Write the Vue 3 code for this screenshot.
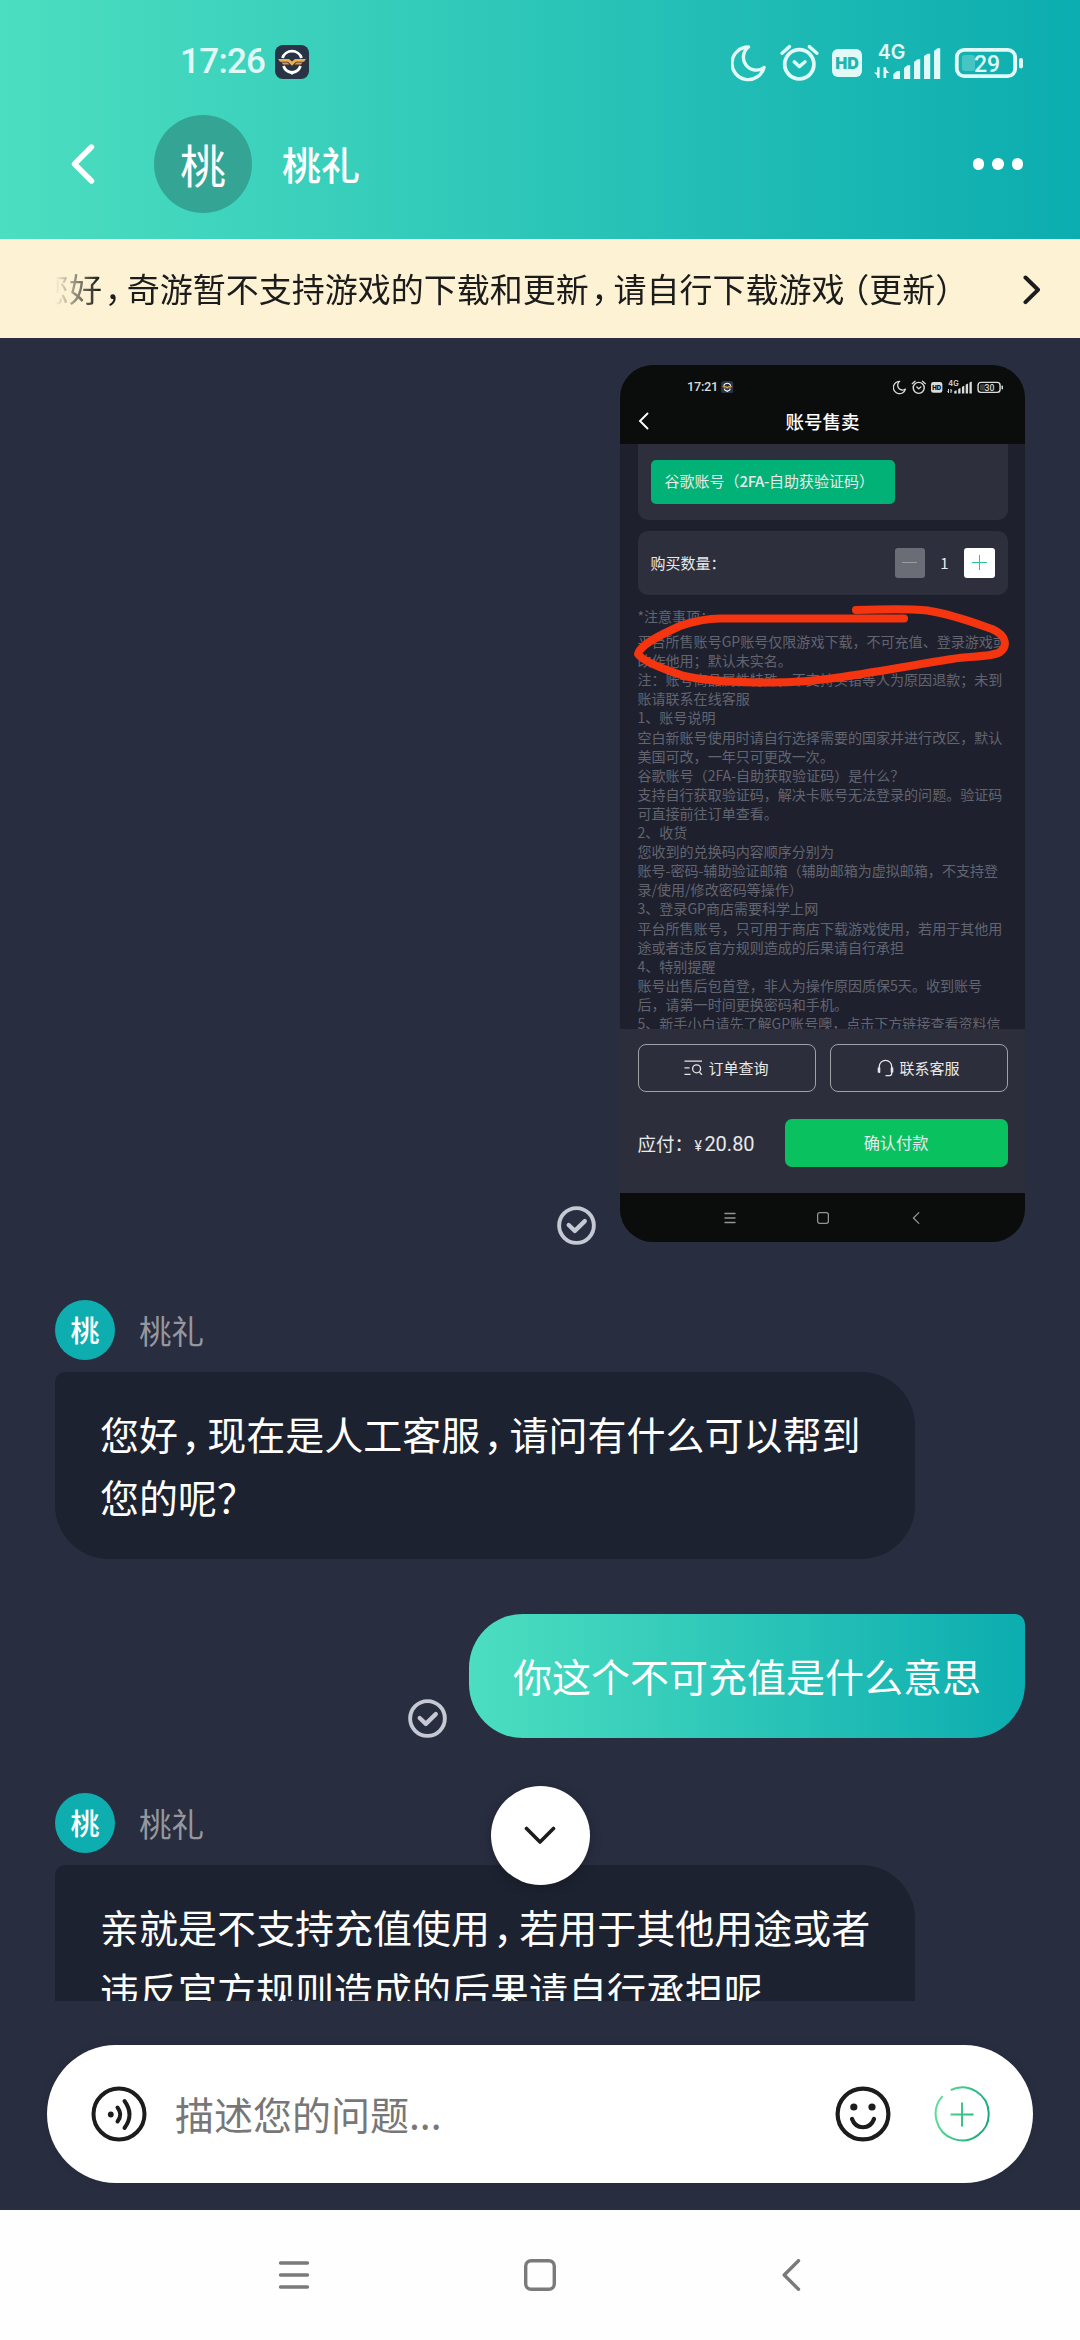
<script setup>
const banner = '您好，奇游暂不支持游戏的下载和更新，请自行下载游戏（更新）'
const agent = '桃礼'
const greeting = ['您好，现在是人工客服，请问有什么可以帮到', '您的呢？']
const reply = ['亲就是不支持充值使用，若用于其他用途或者', '违反官方规则造成的后果请自行承担呢']

const notes = [
  '平台所售账号GP账号仅限游戏下载，不可充值、登录游戏或',
  '改作他用；默认未实名。',
  '注：账号商品属性特殊，不支持买错等人为原因退款；未到',
  '账请联系在线客服',
  '1、账号说明',
  '空白新账号使用时请自行选择需要的国家并进行改区，默认',
  '美国可改，一年只可更改一次。',
  '谷歌账号（2FA-自助获取验证码）是什么？',
  '支持自行获取验证码，解决卡账号无法登录的问题。验证码',
  '可直接前往订单查看。',
  '2、收货',
  '您收到的兑换码内容顺序分别为',
  '账号-密码-辅助验证邮箱（辅助邮箱为虚拟邮箱，不支持登',
  '录/使用/修改密码等操作）',
  '3、登录GP商店需要科学上网',
  '平台所售账号，只可用于商店下载游戏使用，若用于其他用',
  '途或者违反官方规则造成的后果请自行承担',
  '4、特别提醒',
  '账号出售后包首登，非人为操作原因质保5天。收到账号',
  '后，请第一时间更换密码和手机。',
  '5、新手小白请先了解GP账号噢，点击下方链接查看资料信',
]

// Full-width punctuation is set tighter than the ideographs around it.
const kinds = { '，': 'comma', '（': 'paren', '？': 'query' }
const pieces = (text) =>
  text.split(/([，（？])/).filter(Boolean).map((s) => ({ s, k: kinds[s] || '' }))
</script>

<template>
  <div class="screen">
    <svg class="defs" width="0" height="0" aria-hidden="true">
      <symbol id="status" viewBox="0 0 292 42">
        <path d="M17.500 6A16.300 16.300 0 1 0 33 26.500A12.700 12.700 0 0 1 17.500 6Z" fill="none" stroke="currentColor" stroke-width="3.400" stroke-linejoin="round" />
        <g fill="none" stroke="currentColor" stroke-linecap="round" stroke-linejoin="round">
          <circle cx="68.3" cy="23.3" r="14.6" stroke-width="3.8" />
          <path d="M51 12.2L58.5 5.6M78.3 5.6L86 12.2" stroke-width="3.4" />
          <path d="M63.2 20.8L68.3 25.6L74 20.8" stroke-width="3.4" />
        </g>
        <rect x="101" y="8" width="30" height="28" rx="6" fill="currentColor" />
        <path d="M148.6 26.2V37H146V34.2L143 31.4H146V26.2ZM152.5 26.2H155.2V28.8L158.4 32H155.2V37H152.5Z" fill="currentColor" />
        <path d="M162.4 38V33L166 30H169V38ZM173 38V27L176.5 24.3H179.2V38ZM183 38V21L186.5 18.3H189.2V38ZM193 38V15L196.5 12.7H199.2V38ZM203 38V10L206.5 7.3H209.2V38Z" fill="currentColor" />
        <rect x="225.8" y="8.8" width="58.4" height="26.4" rx="7.5" fill="none" stroke="currentColor" stroke-width="3.8" />
        <rect x="231" y="14" width="13" height="16" rx="3" fill="currentColor" opacity=".25" />
        <rect x="288" y="17" width="4" height="10.5" rx="2" fill="currentColor" />
      </symbol>
      <symbol id="app-mark" viewBox="0 0 34 34">
        <rect width="34" height="34" rx="8" fill="#283345" />
        <path d="M7.5 13A10 10 0 0 1 26.500 13M8.500 21A10 10 0 0 0 17 27.500A10 10 0 0 0 25.500 21" fill="none" stroke="#fff" stroke-width="2.8" />
        <path d="M14 27H20L17 30Z" fill="#fff" />
        <path d="M3 14H14L17 16.500L20 14H31L29 16.800H21L17 20.800L13 16.800H5Z" fill="#eeb04e" />
        <path d="M6.500 17.600H12.500L14.500 19.600H8ZM27.500 17.600H21.500L19.500 19.600H26Z" fill="#e8963a" />
      </symbol>
      <symbol id="tick" viewBox="0 0 40 40">
        <circle cx="20" cy="20" r="17.8" fill="none" stroke="currentColor" stroke-width="4" />
        <path d="M12 19.500L18.300 25.500L28.500 15.500" fill="none" stroke="currentColor" stroke-width="4.400" stroke-linecap="round" stroke-linejoin="round" />
      </symbol>
      <symbol id="nav-menu" viewBox="0 0 32 32">
        <path d="M2.500 4H29.500M2.500 16H29.500M2.500 28H29.500" fill="none" stroke="currentColor" stroke-width="3.400" stroke-linecap="round" />
      </symbol>
      <symbol id="nav-home" viewBox="0 0 32 32">
        <rect x="1.700" y="1.700" width="28.600" height="28.600" rx="5.500" fill="none" stroke="currentColor" stroke-width="3.400" />
      </symbol>
      <symbol id="nav-back" viewBox="0 0 32 32">
        <path d="M23.500 1.700L9.200 16L23.500 30.300" fill="none" stroke="currentColor" stroke-width="3.400" stroke-linecap="round" stroke-linejoin="round" />
      </symbol>
    </svg>

    <header class="header">
      <div class="status">
        <span class="clock">17:26</span>
        <svg class="app-mark"><use href="#app-mark" /></svg>
        <svg class="cluster" viewBox="0 0 292 42">
          <use href="#status" width="292" height="42" />
          <text x="116" y="28.200" class="hd">HD</text>
          <text x="160.500" y="17.800" class="net">4G</text>
          <text x="256" y="30.600" class="pct">29</text>
        </svg>
      </div>
      <div class="titlebar">
        <svg class="back" viewBox="0 0 24 40">
          <path d="M20.500 3L3.500 20L20.500 37" fill="none" stroke="#fff" stroke-width="5.400" stroke-linecap="round" stroke-linejoin="round" />
        </svg>
        <div class="avatar big"><span>桃</span></div>
        <h1 class="name">{{ agent }}</h1>
        <div class="more"><i></i><i></i><i></i></div>
      </div>
    </header>

    <div class="banner">
      <div class="marquee"><p><span v-for="(p, i) in pieces(banner)" :key="i" :class="p.k">{{ p.s }}</span></p></div>
      <svg class="go" viewBox="0 0 18 30">
        <path d="M2.500 2.500L15 14.800L2.500 27.200" fill="none" stroke="#1c1c1c" stroke-width="4" stroke-linecap="round" stroke-linejoin="round" />
      </svg>
    </div>

    <main class="chat">
      <div class="mine shot-row">
        <svg class="tick"><use href="#tick" /></svg>
        <div class="shot">
          <div class="s-top">
            <div class="s-status">
              <span class="s-clock">17:21</span>
              <svg class="s-mark"><use href="#app-mark" /></svg>
              <svg class="s-cluster" viewBox="0 0 292 42">
                <use href="#status" width="292" height="42" />
                <text x="116" y="28.200" class="hd dark">HD</text>
                <text x="160.500" y="17.800" class="net">4G</text>
                <text x="256" y="30.600" class="pct">30</text>
              </svg>
            </div>
            <div class="s-title">
              <svg class="s-back" viewBox="0 0 12 18">
                <path d="M9.500 1.500L2 9L9.500 16.500" fill="none" stroke="#fff" stroke-width="1.900" stroke-linecap="round" />
              </svg>
              <b>账号售卖</b>
            </div>
          </div>
          <div class="s-body">
            <div class="s-card first"><div class="s-opt">谷歌账号（<em>2FA-</em>自助获验证码）</div></div>
            <div class="s-card qty">
              <span class="q-label">购买数量：</span>
              <i class="q-btn minus"></i>
              <span class="q-num">1</span>
              <i class="q-btn plus"></i>
            </div>
            <p class="s-note head">*注意事项：</p>
            <p v-for="(n, i) in notes" :key="i" class="s-note">{{ n }}</p>
          </div>
          <div class="s-foot">
            <div class="s-pair">
              <div class="s-out">
                <svg width="19" height="16" viewBox="0 0 19 16" fill="none" stroke="#e6e6e8" stroke-width="1.300">
                  <path d="M.5 1.200H18M.5 7.800H5.500M.5 14.300H6.500M15.500 12.200L18 14.800" /><circle cx="12.600" cy="8.800" r="4" />
                </svg>
                订单查询
              </div>
              <div class="s-out">
                <svg width="17" height="18" viewBox="0 0 17 18" fill="none" stroke="#e6e6e8" stroke-width="1.300">
                  <path d="M2.300 14V7.500A6.200 6.200 0 0 1 14.700 7.500V14.500Q14.700 16.600 12.500 16.600H8.500" /><path d="M2 8.500V13.500M15 8.500V13.500" stroke-width="2.600" />
                </svg>
                联系客服
              </div>
            </div>
            <div class="s-pay">
              <span class="s-sum">应付：<small>¥</small><span class="s-num">20.80</span></span>
              <div class="s-ok">确认付款</div>
            </div>
          </div>
          <div class="s-nav">
            <svg><use href="#nav-menu" /></svg>
            <svg><use href="#nav-home" /></svg>
            <svg><use href="#nav-back" /></svg>
          </div>
          <svg class="mark" viewBox="0 0 405 877">
            <path d="M236 245C270 244 300 244 310 246C334 250 352 257 372 264C388 271 387 282 380 287C372 292 352 291 332 294C300 299 262 306 222 312C190 317 160 318 136 317.500C110 317 86 316 64 311C46 305 22 296 18 289C20 280 40 270 60 261C78 255 90 253.500 100 253.500H284" fill="none" stroke="#f5350f" stroke-width="8" stroke-linecap="round" stroke-linejoin="round" />
          </svg>
        </div>
      </div>

      <div class="who"><div class="avatar"><span>桃</span></div><span>{{ agent }}</span></div>
      <div class="bubble">
        <p v-for="(l, j) in greeting" :key="j"><span v-for="(p, i) in pieces(l)" :key="i" :class="p.k">{{ p.s }}</span></p>
      </div>

      <div class="mine text-row">
        <svg class="tick"><use href="#tick" /></svg>
        <div class="bubble own"><p>你这个不可充值是什么意思</p></div>
      </div>

      <div class="who second"><div class="avatar"><span>桃</span></div><span>{{ agent }}</span></div>
      <div class="bubble">
        <p v-for="(l, j) in reply" :key="j"><span v-for="(p, i) in pieces(l)" :key="i" :class="p.k">{{ p.s }}</span></p>
      </div>
    </main>

    <div class="jump">
      <svg width="32" height="20" viewBox="0 0 32 20"><path d="M2.500 2.500L16 16L29.500 2.500" fill="none" stroke="#1c1c1c" stroke-width="3.600" stroke-linecap="round" stroke-linejoin="round" /></svg>
    </div>

    <div class="composer">
      <div class="field">
        <svg class="ic" viewBox="0 0 56 56" fill="none" stroke="#1c1c1c" stroke-width="4" stroke-linecap="round">
          <circle cx="28" cy="28" r="25.500" />
          <circle cx="19.800" cy="28.500" r="2.900" fill="#1c1c1c" stroke="none" />
          <path d="M26.500 21.500Q32 28.500 26.500 35.500M33.500 15Q43.500 28.500 33.500 42" />
        </svg>
        <span class="hint">描述您的问题...</span>
        <svg class="ic" viewBox="0 0 56 56" fill="none" stroke="#1c1c1c" stroke-width="4.200" stroke-linecap="round">
          <circle cx="28" cy="28" r="25.400" />
          <circle cx="18.800" cy="21" r="3.600" fill="#1c1c1c" stroke="none" />
          <circle cx="37" cy="21" r="3.600" fill="#1c1c1c" stroke="none" />
          <path d="M17 33C21 44 35 44 39 33" />
        </svg>
        <svg class="ic add" viewBox="0 0 56 56" fill="none" stroke="url(#ring)" stroke-width="2">
          <defs>
            <linearGradient id="ring" gradientUnits="userSpaceOnUse" x1="0" y1="20" x2="56" y2="34">
              <stop offset="0" stop-color="#5fe09a" /><stop offset="1" stop-color="#15a878" />
            </linearGradient>
          </defs>
          <path d="M16.800 4A26.500 26.500 0 1 1 8.500 10.200M28 16.500V40.500M16.500 28.500H39.500" />
        </svg>
      </div>
    </div>

    <nav class="nav">
      <svg><use href="#nav-menu" /></svg>
      <svg><use href="#nav-home" /></svg>
      <svg class="nav-back"><use href="#nav-back" /></svg>
    </nav>
  </div>
</template>

<style>
body { margin: 0; }
</style>

<style scoped>
.screen {
  position: relative;
  display: flex;
  flex-direction: column;
  width: 1080px;
  height: 2340px;
  overflow: hidden;
  background: #282d40;
  font-family: "Noto Sans CJK SC", sans-serif;
  color: #fff;
}
.screen p, h1 { margin: 0; font-weight: 400; white-space: nowrap; }
.defs { position: absolute; }
.comma { font-feature-settings: "halt"; margin: 0 .17em 0 .08em; }
.paren { font-feature-settings: "halt"; margin-left: .25em; }
.query { font-feature-settings: "palt"; }

.header { height: 239px; flex: none; background: linear-gradient(90deg, #4cdec0, #0cadb0); }
.status { display: flex; align-items: center; height: 85px; padding: 38px 57px 0 180px; box-sizing: border-box; color: #e2faf7; }
.clock { width: 95px; font: 500 35px/40px Roboto, sans-serif; letter-spacing: -.7px; }
.app-mark { width: 34px; height: 34px; margin-top: 1px; }
.cluster { width: 292px; height: 42px; margin-left: auto; }
.hd { font: 900 16px Inter, sans-serif; fill: #1fb5b1; text-anchor: middle; }
.hd.dark { fill: #0b0d0d; }
.net { font: 600 19.500px Inter, sans-serif; fill: currentColor; text-anchor: middle; }
.pct { font: 500 23px Roboto, sans-serif; fill: currentColor; text-anchor: middle; }
.titlebar { display: flex; align-items: center; height: 98px; margin-top: 30px; padding: 0 57px 0 71px; }
.back { width: 24px; height: 40px; margin-right: 59px; }
.avatar { display: flex; align-items: center; justify-content: center; flex: none; width: 60px; height: 60px; border-radius: 50%; background: #0eaeb0; font-size: 29px; font-weight: 500; line-height: 40px; }
.avatar span { margin-top: -2px; }
.avatar.big { width: 98px; height: 98px; background: #34a594; font-size: 46px; font-weight: 400; }
.name { margin: -2px 0 0 30px; font-size: 39px; font-weight: 500; line-height: 60px; }
.more { display: flex; gap: 8px; margin-left: auto; }
.more i { width: 11.500px; height: 11.500px; border-radius: 50%; background: #fff; }

.banner { display: flex; align-items: center; justify-content: space-between; flex: none; height: 99px; padding: 0 39px 0 55px; background: #fdf3d4; color: #1c1c1c; font-size: 33px; line-height: 50px; }
.marquee { display: flex; width: 920px; overflow: hidden; mask-image: linear-gradient(90deg, transparent, #000 44px); }
.marquee p { margin: -2px 0 0 -19px; }
.go { width: 18px; height: 30px; margin-top: 2px; }

.chat { display: flex; flex-direction: column; align-items: flex-start; flex: none; height: 1663px; overflow: hidden; padding: 27px 55px 0; box-sizing: border-box; }
.mine { display: flex; align-items: flex-end; align-self: flex-end; gap: 22px; }
.shot-row { gap: 24px; }
.tick { width: 39px; height: 39px; color: #c6c9d3; }
.shot-row .tick { margin-bottom: -3px; }
.text-row { margin-top: 55px; }
.who { display: flex; align-items: center; gap: 24px; height: 60px; margin: 58px 0 12px; font-size: 32.500px; color: #96979d; line-height: 50px; }
.who.second { margin-top: 55px; }
.who > span { margin-top: -1px; }
.who .avatar { color: #fff; }
.bubble { flex: none; width: 860px; height: 187px; padding: 30px 45px 0; box-sizing: border-box; border-radius: 10px 54px 54px 54px; background: #1d2230; font-size: 39px; line-height: 63px; }
.bubble.own { width: 556px; height: 124px; padding: 30px 44px 0; border-radius: 54px 10px 54px 54px; background: linear-gradient(90deg, #4cdec0, #0cadb0); }

.shot { position: relative; display: flex; flex-direction: column; width: 405px; height: 877px; overflow: hidden; border-radius: 33px; background: #1e202e; color: #e9e9eb; }
.s-top { flex: none; height: 79px; background: #0b0d0d; }
.s-status { display: flex; align-items: center; height: 36px; padding: 8px 22px 0 67px; box-sizing: border-box; color: #d9dbdb; }
.s-clock { width: 34px; font: 500 12.800px/16px Roboto, sans-serif; letter-spacing: -.3px; }
.s-mark { width: 12.500px; height: 12.500px; }
.s-cluster { width: 110px; height: 16px; margin-left: auto; }
.s-title { display: flex; align-items: center; height: 40px; padding: 0 30px 0 18px; }
.s-back { width: 12px; height: 18px; }
.s-title b { flex: 1; font-size: 18.500px; font-weight: 500; line-height: 30px; text-align: center; color: #fff; }
.s-body { flex: 1; min-height: 0; overflow: hidden; padding: 0 17.500px; }
.s-card { box-sizing: border-box; background: #2d303c; border-radius: 10px; }
.s-card.first { height: 75.500px; padding: 16px 13px; border-radius: 0 0 10px 10px; }
.s-opt { width: 244px; height: 43.500px; padding-left: 14px; box-sizing: border-box; border-radius: 5px; background: #02b175; font-size: 15px; line-height: 42px; white-space: nowrap; }
.s-opt em { font-style: normal; font-weight: 500; letter-spacing: -.4px; }
.qty { display: flex; align-items: center; height: 64.500px; margin-top: 11px; padding: 0 13px; font-size: 15px; }
.q-label { flex: 1; margin-top: -1px; }
.q-btn { width: 30.500px; height: 30.500px; border-radius: 3px; }
.minus { background: linear-gradient(#9a9ca3, #9a9ca3) center / 15px 1.200px no-repeat, #6a6d76; }
.plus { background: linear-gradient(#2fc28d, #2fc28d) center / 15px 1.400px no-repeat, linear-gradient(#2fc28d, #2fc28d) center / 1.400px 15px no-repeat, #fff; }
.q-num { width: 39px; text-align: center; }
.screen .s-note { font-size: 14.040px; line-height: 19.100px; height: 19.100px; color: #62656f; }
.screen .s-note.head { margin: 12px 0 6px; }
.s-foot { flex: none; height: 164px; padding: 15px 17.500px 0; box-sizing: border-box; background: #2c2f3b; }
.s-pair { display: flex; gap: 14px; }
.s-out { display: flex; align-items: center; justify-content: center; gap: 5px; flex: 1; height: 48px; box-sizing: border-box; border: 1.200px solid #a0a2a8; border-radius: 8px; font-size: 15px; line-height: 20px; }
.s-pay { display: flex; align-items: center; justify-content: space-between; margin-top: 26.500px; }
.s-sum { font-size: 18.500px; line-height: 30px; white-space: nowrap; }
.s-sum small { margin-left: 1.500px; font: 14px Roboto, sans-serif; }
.s-num { margin-left: 2.500px; font: 400 20px Roboto, sans-serif; }
.s-ok { width: 223px; height: 48px; border-radius: 7px; background: #0ac160; font-size: 16.200px; line-height: 46px; text-align: center; }
.s-nav { display: flex; align-items: center; justify-content: center; gap: 81px; flex: none; height: 49px; background: #0b0d0d; color: #929493; }
.s-nav svg { width: 12px; height: 12px; }
.mark { position: absolute; inset: 0; width: 405px; height: 877px; }

.jump { position: absolute; left: 490.500px; top: 1786px; display: flex; align-items: center; justify-content: center; width: 99px; height: 99px; border-radius: 50%; background: #fff; box-shadow: 0 2px 12px rgba(0, 0, 0, .25); }

.composer { flex: none; height: 209px; padding: 44px 47px 0; box-sizing: border-box; }
.field { display: flex; align-items: center; height: 138px; padding: 0 43px 0 44px; box-sizing: border-box; border-radius: 69px; background: #fff; box-shadow: 0 0 8px rgba(0, 0, 0, .12); }
.ic { width: 56px; height: 56px; }
.hint { flex: 1; margin: -3px 0 0 28px; font-size: 39px; line-height: 60px; color: #777; }
.add { margin-left: 43px; }
.nav { display: flex; justify-content: center; gap: 214px; flex: 1; padding-top: 49px; background: #fefefe; color: #7a7a7a; }
.nav svg { width: 32px; height: 32px; }
.nav .nav-back { margin: 0 -5px 0 5px; }
</style>
